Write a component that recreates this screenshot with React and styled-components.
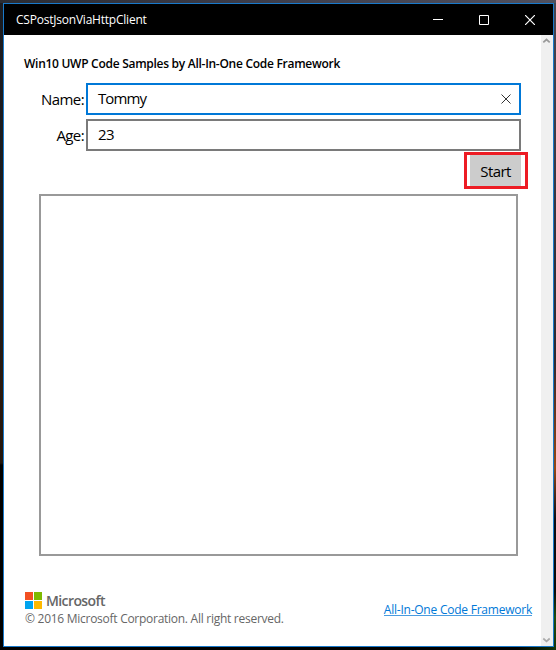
import React from "react";
import styled, { createGlobalStyle } from "styled-components";

const Global = createGlobalStyle`
  * { box-sizing: border-box; }
  body { margin: 0; background: #000; font-family: "Open Sans", "Noto Sans", sans-serif; }
`;

const Desktop = styled.div`
  width: 556px;
  height: 650px;
  padding: 3px 2px 3px 3px;
  background:
    linear-gradient(90deg, #2b2c32, #3c3c49 45%, #50505e) 0 0 / 100% 3px no-repeat,
    linear-gradient(#1b1c20, #191a1e 40%, #29190f 60%, #22150c 463px, #000 465px) 0 0 / 3px 100% no-repeat,
    linear-gradient(#454550, #34343e 35%, #2a2930 55%, #5c3220 62%, #934713 72%, #4b2917 76%, #090b12 80%, #070907 91%, #1e4c0d 95%, #143208) 100% 0 / 3px 100% no-repeat,
    linear-gradient(90deg, #000 93%, #143006) 0 100% / 100% 3px no-repeat,
    #000;
`;

const Window = styled.main`
  display: flex;
  flex-direction: column;
  width: 551px;
  height: 644px;
  border: 1px solid #1979ca;
  background: #fff;
`;

const TitleBar = styled.header`
  display: flex;
  flex: 0 0 31px;
  align-items: center;
  justify-content: space-between;
  padding-left: 12px;
  background: #000;
  color: #fff;
`;

const Label = styled.span`
  display: block;
  white-space: nowrap;
  font-size: ${(p) => p.$size}px;
  font-weight: ${(p) => p.$weight || 400};
  letter-spacing: ${(p) => p.$track || 0}px;
  line-height: 20px;
`;

const Controls = styled.div`
  display: flex;
`;

const WindowButton = styled.button`
  display: grid;
  place-items: center;
  width: 46px;
  height: 31px;
  padding: 0;
  border: 0;
  background: none;
  color: #fff;
`;

const Body = styled.div`
  display: flex;
  flex: 1;
  min-height: 0;
`;

const Page = styled.section`
  display: flex;
  flex-direction: column;
  width: 537px;
  padding: 19px 0 0 20px;
  color: #000;
`;

const Form = styled.div`
  display: grid;
  grid-template-columns: 60px 435px;
  grid-template-rows: 32px 32px;
  gap: 4px 2px;
  margin-top: 9px;
`;

const FieldLabel = styled.label`
  padding-top: 6px;
  justify-self: end;
`;

const Field = styled.div`
  display: flex;
  align-items: center;
  justify-content: space-between;
  padding: 0 8px 2px 10px;
  border: 2px solid ${(p) => (p.$focused ? "#0078d7" : "#7a7a7a")};
`;

const ClearButton = styled.button`
  padding: 2px 0 0;
  border: 0;
  background: none;
`;

const Highlight = styled.div`
  align-self: flex-end;
  width: 64px;
  height: 37px;
  margin: 1px 13px 0 0;
  padding: 0 4px 0 3px;
  border: 3px solid #ed1c24;
`;

const StartButton = styled.button`
  display: grid;
  place-items: center;
  width: 51px;
  height: 31px;
  padding: 0;
  border: 0;
  background: #ccc;
  color: #000;
  font-family: inherit;
`;

const Output = styled.div`
  width: 479px;
  height: 362px;
  margin: 5px 0 0 15px;
  border: 2px solid #999;
`;

const Footer = styled.footer`
  display: flex;
  justify-content: space-between;
  margin-top: 35px;
  padding: 0 9px 0 1px;
  color: #666;
`;

const Brand = styled.div`
  display: flex;
  align-items: center;
  gap: 4px;
  height: 19px;
`;

const Copyright = styled.div`
  margin-top: -1px;
`;

const Link = styled.a`
  height: 16px;
  margin-top: 9px;
  border-bottom: 1px solid #4a9ce0;
  color: #0078d7;
`;

const ScrollBar = styled.aside`
  display: flex;
  flex-direction: column;
  justify-content: space-between;
  width: 12px;
  padding: 3px 0 3px 1px;
  background: #f0f0f0;
`;

const Icon = styled.svg`
  display: block;
  fill: none;
  stroke: ${(p) => p.$color || "#fff"};
  stroke-width: ${(p) => p.$stroke || 1};
`;

const Logo = () => (
  <svg width="17" height="17" viewBox="0 0 17 17" shapeRendering="crispEdges">
    <path fill="#f25022" d="M0 0h8v8H0z" />
    <path fill="#7fba00" d="M9 0h8v8H9z" />
    <path fill="#00a4ef" d="M0 9h8v8H0z" />
    <path fill="#ffb900" d="M9 9h8v8H9z" />
  </svg>
);

export default function App() {
  return (
    <>
      <Global />
      <Desktop>
        <Window>
          <TitleBar>
            <Label $size={12} $track={-0.22}>CSPostJsonViaHttpClient</Label>
            <Controls>
              <WindowButton aria-label="Minimize">
                <Icon width="10" height="11"><path d="M0 5.5h10" /></Icon>
              </WindowButton>
              <WindowButton aria-label="Maximize">
                <Icon width="10" height="10"><path d="M.5.5h9v9h-9z" /></Icon>
              </WindowButton>
              <WindowButton aria-label="Close">
                <Icon width="10" height="10" $stroke={1.2}><path d="M0 0l10 10M10 0L0 10" /></Icon>
              </WindowButton>
            </Controls>
          </TitleBar>
          <Body>
            <Page>
              <Label $size={12} $weight={600} $track={-0.28}>Win10 UWP Code Samples by All-In-One Code Framework</Label>
              <Form>
                <FieldLabel><Label $size={15} $track={-0.6}>Name:</Label></FieldLabel>
                <Field $focused>
                  <Label $size={15} $track={-0.9}>Tommy</Label>
                  <ClearButton aria-label="Clear">
                    <Icon width="10" height="10" $color="#333"><path d="M.5.5l9 9M9.5.5l-9 9" /></Icon>
                  </ClearButton>
                </Field>
                <FieldLabel><Label $size={15} $track={-0.6}>Age:</Label></FieldLabel>
                <Field><Label $size={15} $track={-0.5}>23</Label></Field>
              </Form>
              <Highlight>
                <StartButton><Label $size={15} $track={-0.6}>Start</Label></StartButton>
              </Highlight>
              <Output />
              <Footer>
                <div>
                  <Brand>
                    <Logo />
                    <Label $size={14} $weight={600} $track={-0.6}>Microsoft</Label>
                  </Brand>
                  <Copyright>
                    <Label $size={12} $track={-0.27}>© 2016 Microsoft Corporation. All right reserved.</Label>
                  </Copyright>
                </div>
                <Link><Label $size={12} $track={-0.23}>All-In-One Code Framework</Label></Link>
              </Footer>
            </Page>
            <ScrollBar>
              <Icon width="9" height="6" $color="#999" $stroke={1.7}><path d="M1.3 4.3L4.5 1.5l3.2 2.8" /></Icon>
              <Icon width="9" height="6" $color="#aaa" $stroke={1.7}><path d="M1.3 1.5l3.2 2.8 3.2-2.8" /></Icon>
            </ScrollBar>
          </Body>
        </Window>
      </Desktop>
    </>
  );
}
